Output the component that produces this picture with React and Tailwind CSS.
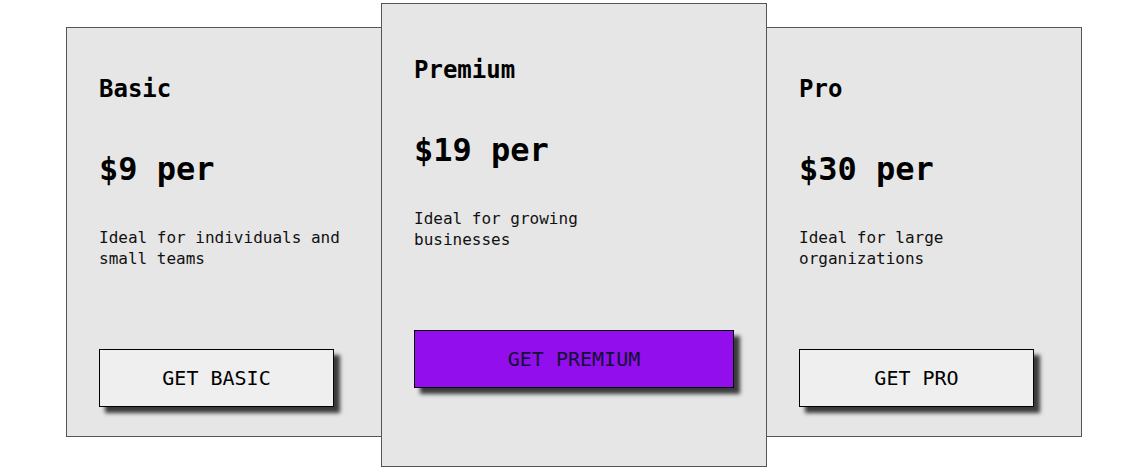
import React from 'react';

const planes = [
  { nombre: 'Basic', precio: '$9 per', texto: 'Ideal for individuals and small teams', boton: 'GET BASIC', destacado: false },
  { nombre: 'Premium', precio: '$19 per', texto: 'Ideal for growing businesses', boton: 'GET PREMIUM', destacado: true },
  { nombre: 'Pro', precio: '$30 per', texto: 'Ideal for large organizations', boton: 'GET PRO', destacado: false },
];

const Tarjeta = ({ plan }) => {
  const { nombre, precio, texto, boton, destacado } = plan;
  return (
    <div
      className={`bg-[#e6e6e6] border border-[#555] flex flex-col px-8 ${
        destacado ? 'relative z-10 -mx-px w-[386px] h-[464px] pt-[50px]' : 'mt-[24px] w-[316px] h-[410px] pt-[45px]'
      }`}
    >
      <h3 className="text-[24px] leading-[32px] font-bold text-black">{nombre}</h3>
      <div className="mt-[44px] text-[32px] leading-[40px] font-bold text-black">{precio}</div>
      <p className="mt-[38px] max-w-[250px] text-[16px] leading-[21px] text-[#111]">{texto}</p>
      <button
        className={`mt-[80px] h-[58px] border border-black text-[20px] shadow-[6px_6px_4px_rgba(0,0,0,0.75)] ${
          destacado ? 'w-[320px] bg-[#920eec] text-[#111133]' : 'w-[235px] bg-[#efefef] text-black'
        }`}
      >
        {boton}
      </button>
    </div>
  );
};

const App = () => {
  return (
    <div className="w-full min-h-[473px] bg-white pt-[3px] pl-px flex justify-center items-start font-['DejaVu_Sans_Mono',monospace]">
      {planes.map((plan) => (
        <Tarjeta key={plan.nombre} plan={plan} />
      ))}
    </div>
  );
};

export default App;
